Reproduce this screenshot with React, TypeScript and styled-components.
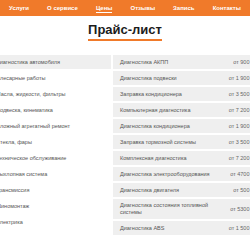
import React from "react";
import styled, { createGlobalStyle } from "styled-components";

type Row = { name: string; price: string };

const GlobalStyle = createGlobalStyle`
  html, body {
    margin: 0;
    padding: 0;
    background: #ffffff;
    font-family: "Liberation Sans", Arial, sans-serif;
    overflow: hidden;
  }
`;

const Header = styled.header`
  height: 16px;
  background: #f07a2a;
  display: flex;
  justify-content: space-around;
  align-items: center;
`;

const NavLink = styled.span<{ active?: boolean }>`
  color: #fff;
  font-size: 6px;
  font-weight: bold;
  line-height: 8px;
  border-bottom: 1px solid ${({ active }) => (active ? "#fff" : "transparent")};
  padding-top: 1px;
`;

const TitleWrap = styled.div`
  display: flex;
  justify-content: center;
  padding-top: 6px;
`;

const Title = styled.h1`
  margin: 0;
  font-size: 13px;
  font-weight: bold;
  color: #1c1c1c;
  line-height: 15px;
  padding-bottom: 2px;
  border-bottom: 2px solid #f07a2a;
`;

const Stage = styled.div`
  display: flex;
  justify-content: center;
  margin-top: 14px;
`;

const Table = styled.div`
  flex: none;
  width: 274px;
  display: grid;
  grid-template-columns: 123px 149px;
  column-gap: 2px;
  align-items: start;
`;

const Column = styled.div`
  display: flex;
  flex-direction: column;
  gap: 2px;
`;

const Category = styled.div<{ active?: boolean }>`
  min-height: 14px;
  display: flex;
  align-items: center;
  padding: 0 8px;
  font-size: 5.5px;
  color: #555;
  background: ${({ active }) => (active ? "#efefef" : "transparent")};
`;

const PriceRow = styled.div`
  min-height: 14px;
  display: flex;
  align-items: center;
  justify-content: space-between;
  gap: 6px;
  padding: 3px 8px 3px 7px;
  box-sizing: border-box;
  background: #efefef;
  font-size: 5.5px;
  line-height: 7px;
  color: #555;
`;

const Name = styled.span`
  max-width: 90px;
`;

const Price = styled.span`
  white-space: nowrap;
  color: #666;
`;

const nav = ["Услуги", "О сервисе", "Цены", "Отзывы", "Запись", "Контакты"];

const categories = [
  "Диагностика автомобиля",
  "Слесарные работы",
  "Масла, жидкости, фильтры",
  "Подвеска, кинематика",
  "Сложный агрегатный ремонт",
  "Стекла, фары",
  "Техническое обслуживание",
  "Выхлопная система",
  "Трансмиссия",
  "Шиномонтаж",
  "Электрика",
];

const prices: Row[] = [
  { name: "Диагностика АКПП", price: "от 900 ₽" },
  { name: "Диагностика подвески", price: "от 1 900 ₽" },
  { name: "Заправка кондиционера", price: "от 3 500 ₽" },
  { name: "Компьютерная диагностика", price: "от 7 200 ₽" },
  { name: "Диагностика кондиционера", price: "от 1 900 ₽" },
  { name: "Заправка тормозной системы", price: "от 3 500 ₽" },
  { name: "Комплексная диагностика", price: "от 7 200 ₽" },
  { name: "Диагностика электрооборудования", price: "от 4700 ₽" },
  { name: "Диагностика двигателя", price: "от 500 ₽" },
  { name: "Диагностика состояния топливной системы", price: "от 5300 ₽" },
  { name: "Диагностика ABS", price: "от 1 500 ₽" },
];

const App: React.FC = () => {
  return (
    <>
      <GlobalStyle />
      <Header>
        {nav.map((item) => (
          <NavLink key={item} active={item === "Цены"}>
            {item}
          </NavLink>
        ))}
      </Header>
      <TitleWrap>
        <Title>Прайс-лист</Title>
      </TitleWrap>
      <Stage>
        <Table>
          <Column>
            {categories.map((c, i) => (
              <Category key={c} active={i === 0}>
                {c}
              </Category>
            ))}
          </Column>
          <Column>
            {prices.map((row) => (
              <PriceRow key={row.name}>
                <Name>{row.name}</Name>
                <Price>{row.price}</Price>
              </PriceRow>
            ))}
          </Column>
        </Table>
      </Stage>
    </>
  );
};

export default App;
